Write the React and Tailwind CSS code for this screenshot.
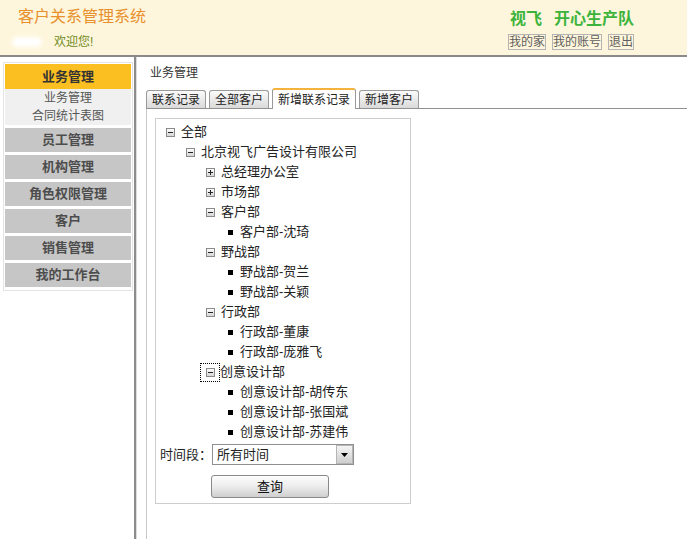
import React from 'react';

const font = { fontFamily: '"Liberation Sans", "Noto Sans CJK SC", sans-serif' };

const menus = ['员工管理', '机构管理', '角色权限管理', '客户', '销售管理', '我的工作台'];
const tabs = ['联系记录', '全部客户', '新增联系记录', '新增客户'];

const tree = [
  { level: 0, type: 'minus', label: '全部' },
  { level: 1, type: 'minus', label: '北京视飞广告设计有限公司' },
  { level: 2, type: 'plus', label: '总经理办公室' },
  { level: 2, type: 'plus', label: '市场部' },
  { level: 2, type: 'minus', label: '客户部' },
  { level: 3, type: 'leaf', label: '客户部-沈琦' },
  { level: 2, type: 'minus', label: '野战部' },
  { level: 3, type: 'leaf', label: '野战部-贺兰' },
  { level: 3, type: 'leaf', label: '野战部-关颖' },
  { level: 2, type: 'minus', label: '行政部' },
  { level: 3, type: 'leaf', label: '行政部-董康' },
  { level: 3, type: 'leaf', label: '行政部-庞雅飞' },
  { level: 2, type: 'minus', label: '创意设计部', focus: true },
  { level: 3, type: 'leaf', label: '创意设计部-胡传东' },
  { level: 3, type: 'leaf', label: '创意设计部-张国斌' },
  { level: 3, type: 'leaf', label: '创意设计部-苏建伟' },
];

const indent = ['ml-0', 'ml-[20px]', 'ml-[40px]', 'ml-[62px]'];

function ToggleIcon({ plus }) {
  return (
    <svg width="9" height="9" viewBox="0 0 9 9" className="shrink-0">
      <defs>
        <linearGradient id="tg" x1="0" y1="0" x2="0" y2="1">
          <stop offset="0" stopColor="#ffffff" />
          <stop offset="1" stopColor="#d4d4d4" />
        </linearGradient>
      </defs>
      <rect x="0.5" y="0.5" width="8" height="8" fill="url(#tg)" stroke="#8a8a8a" />
      <rect x="2" y="4" width="5" height="1" fill="#222" />
      {plus && <rect x="4" y="2" width="1" height="5" fill="#222" />}
    </svg>
  );
}

function TreeRow({ node }) {
  return (
    <div className={`flex items-center h-[20px] ${indent[node.level]}`}>
      {node.type === 'leaf' ? (
        <>
          <span className="w-[5px] h-[5px] bg-black shrink-0" />
          <span className="ml-[7px]">{node.label}</span>
        </>
      ) : node.focus ? (
        <>
          <span className="flex items-center justify-center w-[20px] h-[19px] -ml-[6px] border border-dotted border-black">
            <ToggleIcon plus={node.type === 'plus'} />
          </span>
          <span>{node.label}</span>
        </>
      ) : (
        <>
          <ToggleIcon plus={node.type === 'plus'} />
          <span className="ml-[6px]">{node.label}</span>
        </>
      )}
    </div>
  );
}

function App() {
  return (
    <div className="h-[539px] w-[687px] overflow-hidden flex flex-col bg-white" style={font}>
      <header className="h-[57px] shrink-0 bg-[#fef6dc] border-b-2 border-[#8a8a8a] flex justify-between">
        <div className="pl-[18px] pt-[7px]">
          <div className="text-[16px] leading-[20px] text-[#e8902c]">客户关系管理系统</div>
          <div className="flex items-center mt-[8px] -ml-[6px]">
            <span className="w-[30px] h-[10px] bg-white rounded-full blur-[2px]" />
            <span className="ml-[12px] text-[12px] leading-[14px] text-[#6f8a1c]">欢迎您!</span>
          </div>
        </div>
        <div className="pr-[53px] pt-[9px]">
          <div className="text-[16px] leading-[20px] font-bold text-[#3cb43c] ml-[2px]">
            视飞<span className="ml-[12px]">开心生产队</span>
          </div>
          <div className="flex gap-[6px] mt-[5px]">
            {['我的家', '我的账号', '退出'].map((b) => (
              <span key={b} className="border border-[#b4b4b4] text-[12px] leading-[14px] text-[#5e5e5e]">
                {b}
              </span>
            ))}
          </div>
        </div>
      </header>

      <div className="flex flex-1 min-h-0">
        <aside className="w-[136px] shrink-0 border-r-2 border-[#8c8c8c]">
          <div className="mt-[5px] ml-[3px] w-[130px] border border-[#e4e4e4] p-[1px] pb-[3px] bg-white">
            <div className="h-[25px] bg-[#fcbf22] text-[13px] font-bold text-[#333] flex items-center justify-center">
              业务管理
            </div>
            <div className="bg-[#f0f0f0] h-[36px] pt-px text-[12px] leading-[19px] text-[#555] text-center">
              <div className="leading-[16px]">业务管理</div>
              <div className="leading-[20px]">合同统计表图</div>
            </div>
            {menus.map((m) => (
              <div
                key={m}
                className="mt-[3px] h-[24px] bg-[#c6c6c6] text-[13px] font-bold text-[#4d4d4d] flex items-center justify-center"
              >
                {m}
              </div>
            ))}
          </div>
        </aside>

        <main className="flex-1 flex flex-col min-w-0 border-l border-[#dcdcdc] pl-[9px]">
          <div className="pl-[4px] pt-[9px] text-[12px] leading-[14px] text-[#333]">业务管理</div>
          <div className="mt-[7px] flex items-end gap-[3px] border-b border-[#919191] h-[22px]">
            {tabs.map((t, i) =>
              i === 2 ? (
                <div
                  key={t}
                  className="h-[21px] -mb-px px-[5px] flex items-center bg-white border border-b-0 border-[#9a9a9a] border-t-2 border-t-[#f3b33d] rounded-t-[3px] text-[12px] text-[#222]"
                >
                  {t}
                </div>
              ) : (
                <div
                  key={t}
                  className="h-[18px] px-[5px] flex items-center bg-gradient-to-b from-[#fbfbfb] to-[#dadada] border border-b-0 border-[#9a9a9a] rounded-t-[3px] text-[12px] text-[#222]"
                >
                  {t}
                </div>
              )
            )}
          </div>
          <div className="flex-1 border-l border-[#c8c8c8] pl-[8px] pt-[9px]">
            <div className="w-[256px] h-[386px] border border-[#cdcdcd] pt-[3px] pl-[10px] text-[13px] text-[#222]">
              {tree.map((n, i) => (
                <TreeRow key={i} node={n} />
              ))}
              <div className="flex items-center mt-[2px] -ml-[6px] h-[21px]">
                <span>时间段：</span>
                <div className="w-[142px] h-[21px] border border-[#8f8f8f] flex items-center justify-between">
                  <span className="pl-[4px]">所有时间</span>
                  <span className="w-[17px] h-[19px] border border-[#b5b5b5] bg-gradient-to-b from-[#f4f4f4] to-[#cfcfcf] flex items-center justify-center">
                    <svg width="7" height="4" viewBox="0 0 7 4">
                      <path d="M0 0h7L3.5 4z" fill="#000" />
                    </svg>
                  </span>
                </div>
              </div>
              <div className="mt-[10px] ml-[45px] w-[118px] h-[23px] rounded-[3px] border border-[#8a8a8a] bg-gradient-to-b from-[#fdfdfd] via-[#ececec] to-[#cfcfcf] flex items-center justify-center text-[13px] text-[#111]">
                查询
              </div>
            </div>
          </div>
        </main>
      </div>
    </div>
  );
}

export default App;
